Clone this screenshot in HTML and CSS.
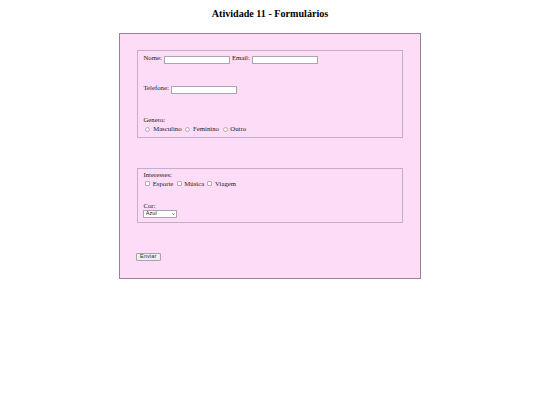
FILE: index.html
```html
<!DOCTYPE html>
<html lang="pt-BR">
<head>
<meta charset="utf-8">
<title>Atividade 11 - Formulários</title>
<link rel="stylesheet" href="styles.css">
</head>
<body>
<h2 class="title">Atividade 11 - Formulários</h2>
<form class="card">
  <fieldset class="group group-personal">
    <div class="row row-input row-first"><label for="nome">Nome:</label> <input class="field" type="text" id="nome"> <label for="email">Email:</label> <input class="field" type="email" id="email"></div>
    <div class="row row-input row-second"><label for="tel">Telefone:</label> <input class="field" type="tel" id="tel"></div>
    <div class="row">Genero:</div>
    <div class="row row-options"><input class="radio" type="radio" name="genero" id="m"> <label for="m">Masculino</label> <input class="radio" type="radio" name="genero" id="f"> <label for="f">Feminino</label> <input class="radio" type="radio" name="genero" id="o"> <label for="o">Outro</label></div>
  </fieldset>
  <fieldset class="group group-prefs">
    <div class="row">Interesses:</div>
    <div class="row row-options row-checks"><input class="check" type="checkbox" id="esp"> <label for="esp">Esporte</label> <input class="check" type="checkbox" id="mus"> <label for="mus">Música</label> <input class="check" type="checkbox" id="via"> <label for="via">Viagem</label></div>
    <div class="row"><label for="cor">Cor:</label></div>
    <div class="row row-select"><span class="select-wrap"><select class="picker" id="cor"><option>Azul</option><option>Vermelho</option><option>Verde</option><option>Amarelo</option></select><svg class="chevron" viewBox="0 0 6 4" aria-hidden="true"><path d="M0.6 0.6 L3 3 L5.4 0.6" fill="none" stroke="#333" stroke-width="1.1"/></svg></span></div>
  </fieldset>
  <div class="actions"><button class="submit" type="submit">Enviar</button></div>
</form>
</body>
</html>
```
FILE: styles.css
```css
body {
  margin: 0;
  padding: 0;
  font-family: "Liberation Serif", "Times New Roman", serif;
  font-size: 6.75px;
  color: #222;
  background: #fff;
}
.title {
  text-align: center;
  font-size: 10.125px;
  line-height: 11.6px;
  font-weight: bold;
  color: #000;
  margin: 8.4px 0;
}
.card {
  width: 267px;
  margin: 12.6px auto;
  padding: 16.9px;
  border: 1px solid #958594;
  background: #fddcf7;
}
.group {
  margin: 0 0.85px 29.8px;
  padding: 2.4px 5.1px 4.2px;
  border: 1px solid #c5b0c2;
}
.group-personal {
  padding-bottom: 4.2px;
}
.group-prefs {
  padding-bottom: 3.8px;
}
.row {
  line-height: 7.8px;
}
.row-first {
  margin-bottom: 20px;
}
.row-second {
  margin-bottom: 21.2px;
}
.row-options {
  margin-top: 1.6px;
}
.row-checks {
  margin-top: 0.6px;
  margin-bottom: 15px;
}
.row-select {
  display: flex;
}
.field {
  box-sizing: border-box;
  width: 66.7px;
  height: 8.6px;
  padding: 0 1px;
  margin: 0;
  border: 1px solid #aba4aa;
  border-radius: 0.5px;
  background: #fff;
  font-family: "Liberation Sans", Arial, sans-serif;
  font-size: 5.6px;
  vertical-align: -2px;
}
.radio,
.check {
  appearance: none;
  -webkit-appearance: none;
  box-sizing: border-box;
  width: 5px;
  height: 5px;
  margin: 0 1px 0 2px;
  border: 1px solid #b7acb5;
  background: #fff6fd;
  vertical-align: -0.6px;
}
.radio {
  border-radius: 50%;
}
.check {
  border-radius: 1px;
  margin-left: 1.6px;
}
.select-wrap {
  position: relative;
  display: block;
}
.picker {
  appearance: none;
  -webkit-appearance: none;
  box-sizing: border-box;
  width: 34px;
  height: 7.6px;
  padding: 0 0 0 1.4px;
  margin: 0;
  border: 1px solid #a9a3a8;
  border-radius: 0.8px;
  background: #fff;
  color: #222;
  font-family: "Liberation Sans", Arial, sans-serif;
  font-size: 5.6px;
  line-height: 5.6px;
  display: block;
}
.chevron {
  position: absolute;
  right: 2.4px;
  top: 2.4px;
  width: 3.2px;
  height: 2.2px;
  pointer-events: none;
}
.actions {
  margin-left: -0.8px;
}
.submit {
  box-sizing: border-box;
  height: 8.6px;
  padding: 0 3.2px;
  margin: 0;
  border: 1px solid #a8a3a7;
  border-radius: 1px;
  background: #efefef;
  color: #333;
  font-family: "Liberation Sans", Arial, sans-serif;
  font-size: 5.6px;
  letter-spacing: 0.1px;
  line-height: 1;
}
```
